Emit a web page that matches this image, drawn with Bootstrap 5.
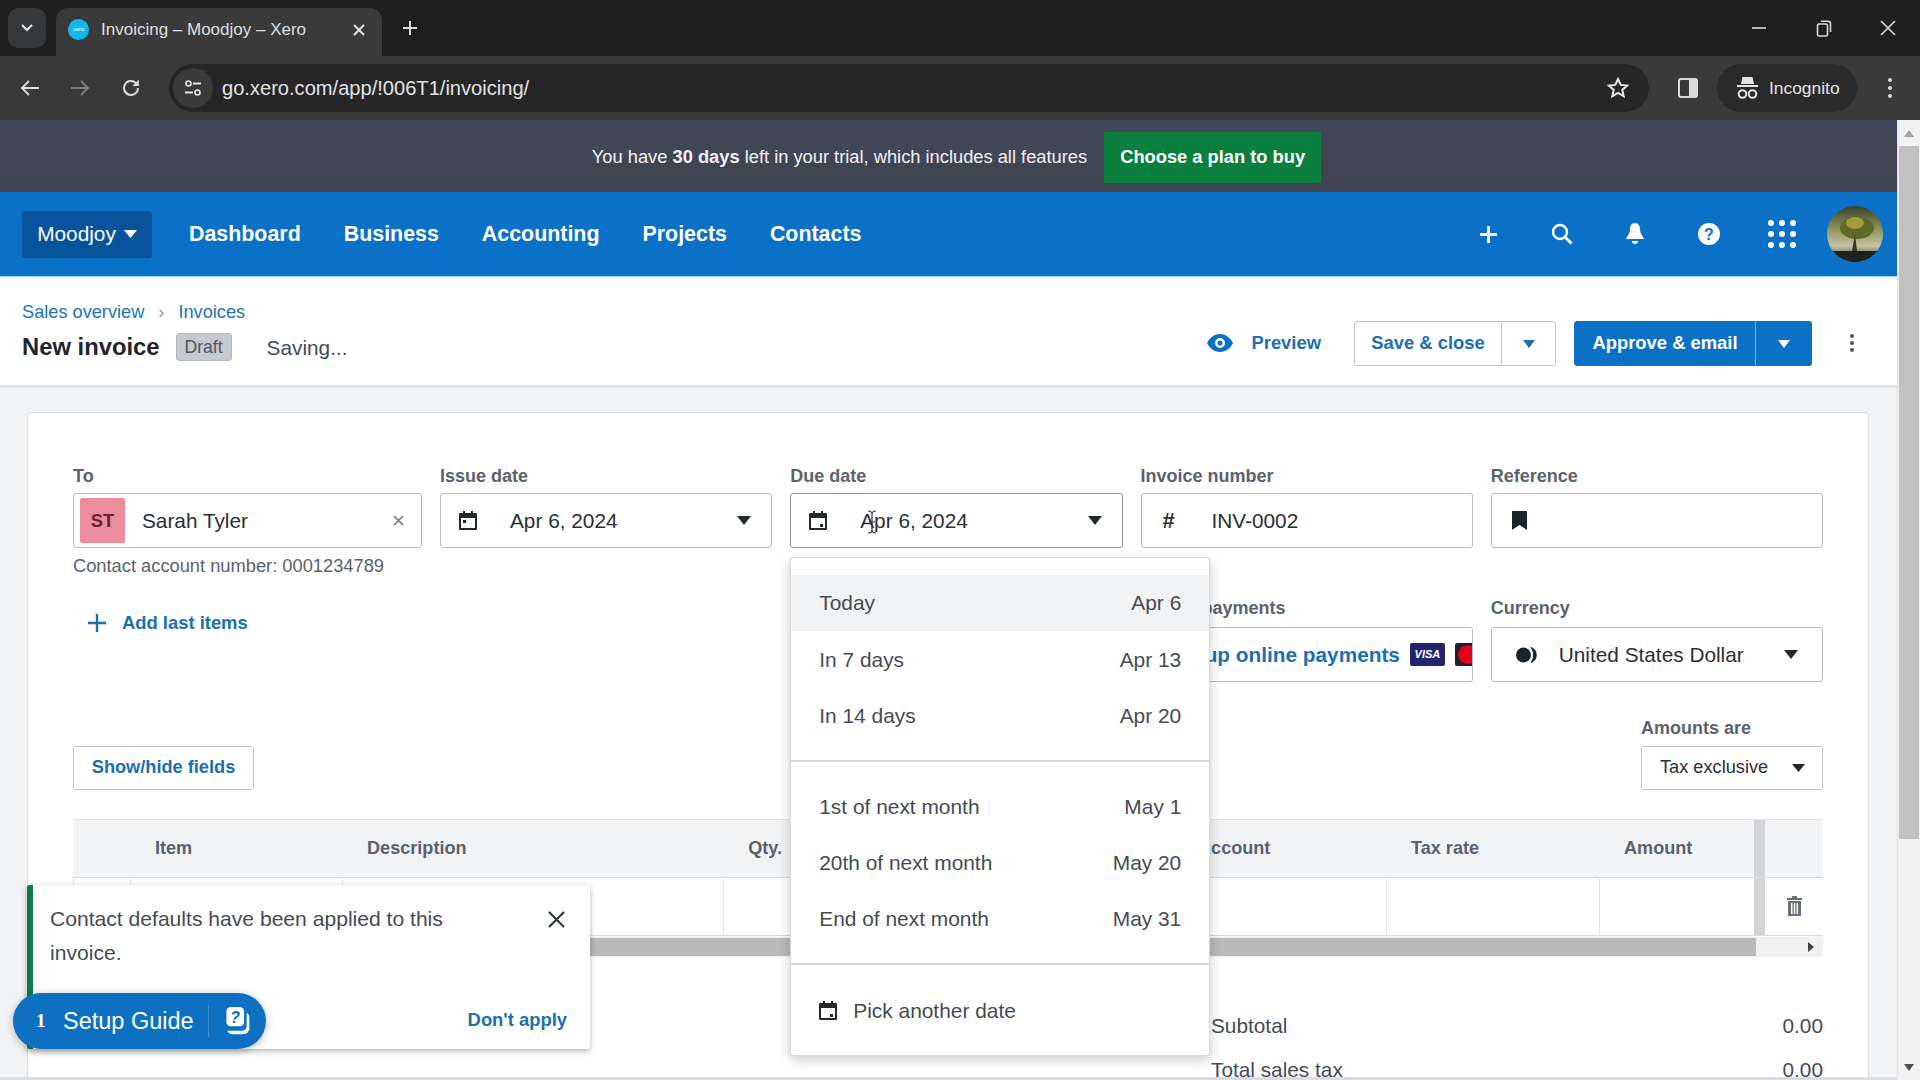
<!DOCTYPE html>
<html lang="en">
<head>
<meta charset="utf-8">
<title>Invoicing – Moodjoy – Xero</title>
<link href="https://cdn.jsdelivr.net/npm/bootstrap@5.3.0/dist/css/bootstrap.min.css" rel="stylesheet">
<style>
html,body{margin:0;height:100%;overflow:hidden}
body{font-family:"Liberation Sans",Arial,sans-serif;font-size:20.8px;color:#2a2f35;background:#fff}
.shell{width:1920px;height:1080px;position:relative;overflow:hidden;display:flex;flex-direction:column}
/* browser chrome */
.tabstrip{height:56px;background:#1f1f20;display:flex;align-items:flex-end;color:#e4e4e4;flex:none}
.tabsearch{width:38px;height:40px;margin:0 10px 8px 8px;background:#37383a;border-radius:10px;display:flex;align-items:center;justify-content:center}
.tabitem{width:326px;height:48px;background:#3a3a3b;border-radius:12px 12px 0 0;display:flex;align-items:center;padding:0 16px 5px 12px;font-size:17px;color:#dfdfdf}
.favi{width:21px;height:21px;border-radius:50%;background:#13b5ea;color:#fff;font-size:6px;line-height:21px;text-align:center;margin-right:12px;flex:none}
.winctl{margin-left:auto;display:flex;align-items:center;height:56px;padding-right:24px;gap:48.500px}
.toolbar{height:64px;background:#3a3a3b;display:flex;align-items:center;flex:none;color:#e4e4e4;padding-left:20px}
.tbicon{flex:none;display:block}
.omni{width:1480px;height:48px;margin-left:28px;background:#262627;border-radius:24px;display:flex;align-items:center;font-size:20.100px;color:#e2e2e2;padding-right:20px}
.siteic{width:40px;height:40px;margin:0 9px 0 4px;background:#3a3a3b;border-radius:50%;display:flex;align-items:center;justify-content:center;flex:none}
.incog{width:140px;height:48px;background:#2a2a2b;border-radius:24px;display:flex;align-items:center;gap:11px;padding-left:20px;font-size:17.400px;margin-left:19px}
.below{flex:1;display:flex;min-height:0}
.pagecol{flex:1;min-width:0;display:flex;flex-direction:column;background:#f2f3f5}
/* banner + nav */
.trial{height:72px;background:linear-gradient(#42475a,#40444f);color:#f1f2f4;display:flex;align-items:center;justify-content:center;font-size:18.300px;flex:none;padding:2px 0 0 16px}
.trial b{font-weight:700}
.buyplan{background:#0b7f3e;color:#fff;border:0;border-radius:2px;font-weight:700;font-size:18.300px;height:51px;width:217px;margin-left:17px;padding:0}
.buyplan:hover{background:#0b7f3e;color:#fff}
.topnav{height:85px;background:#0b71c6;padding:0 5px 0 22px!important;flex:none;border-bottom:1px solid #8bd3ee;flex-wrap:nowrap}
.orgbtn{background:#07549c;color:#fff;border:0;border-radius:3px;height:47px;width:130px;font-size:20.8px;padding:0;margin-right:37px}
.orgbtn:hover{background:#07549c;color:#fff}
.topnav .navbar-nav{gap:43px}
.topnav .navbar-nav .nav-link{color:#fff;font-weight:700;font-size:21.400px;padding:1px 0 0!important}
.topicons{display:flex;align-items:center;margin-left:auto}
.topicons>span{width:73.4px;display:flex;justify-content:center;align-items:center}
/* page header */
.pagehead{height:111px;background:#fff;border-bottom:3px solid #e2e3e5;display:flex;align-items:center;padding:0 0 0 22px;flex:none}
.crumbs{margin:0 0 5px;font-size:18.200px;--bs-breadcrumb-divider:'›';--bs-breadcrumb-item-padding-x:14px}
.crumbs a{color:#1d75b3;text-decoration:none}
.crumbs .breadcrumb-item+.breadcrumb-item::before{color:#8f98a3}
.invtitle{font-weight:700;font-size:23.800px;color:#1f252b;margin:0;line-height:1.2}
.draftpill{background:#c6cacf;color:#4d5560;font-size:17.6px;height:28px;width:56px;border-radius:3px;display:flex;align-items:center;justify-content:center;margin-left:16px;border:1px solid #b4b9bf}
.savingtxt{margin-left:35px;font-size:20.800px;color:#444b54}
.headacts{margin-left:auto;display:flex;align-items:center;padding:24px 85px 0 0}
.prevlink{color:#1a70b0;font-weight:700;font-size:18.4px;display:flex;align-items:center;gap:18px;margin-right:33px}
.outbtn{background:#fff;border:1px solid #c2c6cb;color:#1a70b0;font-weight:700;font-size:18.4px;height:45px;padding:0;border-radius:3px}
.outbtn:hover{background:#fff;color:#1a70b0;border-color:#c2c6cb}
.solbtn{background:#0b71c6;border:1px solid #0b71c6;color:#fff;font-weight:700;font-size:18.4px;height:45px;padding:0;border-radius:3px}
.solbtn:hover{background:#0b71c6;color:#fff;border-color:#0b71c6}
.solsplit{border-left-color:#7fb5e0}
.solsplit:hover{border-left-color:#7fb5e0}
.kebabwrap{position:absolute;left:1849px}
/* card */
.mainarea{flex:1;min-height:0;padding:24px 28px 0 27px;overflow:hidden}
.sheet{background:#fff;border:1px solid #dcdee1;border-radius:4px 4px 0 0;height:700px;padding:51px 45px 0;overflow:hidden;border-bottom:0}
.fieldgrid{display:grid;grid-template-columns:349px repeat(4,minmax(0,1fr));column-gap:18px}
.fldlabel{font-weight:700;font-size:18px;color:#5a626d;line-height:24px;margin:0 0 5px;display:block;white-space:nowrap}
.fldlabel.lowerlabel{margin:48px 0 7px}
.fldbox{height:55px;border:1px solid #b8bcc2;border-radius:3px;display:flex;align-items:center;background:#fff;color:#2a2f35;padding:0;overflow:hidden}
.fldbox.openbox{border-color:#8f959d}
.fldtxt{font-size:20.8px;white-space:nowrap}
.initials{width:45px;height:45px;background:#ec8c9c;color:#6b2530;font-weight:700;font-size:18.4px;border-radius:2px;display:flex;align-items:center;justify-content:center;margin:0 17px 0 6px;flex:none}
.acctno{font-size:18.300px;color:#5b626c;margin-top:6px;line-height:24px}
.addlast{color:#1a70b0;font-weight:700;font-size:18.4px;display:flex;align-items:center;margin:33px 0 0 15px;gap:16px;line-height:24px}
.payrow{padding-left:25px;color:#1a70b0;font-weight:700;font-size:20.8px;white-space:nowrap}
.visab{width:35px;height:23px;background:#23266e;color:#fff;font-size:11px;font-weight:700;font-style:italic;display:inline-flex;align-items:center;justify-content:center;border-radius:2px;flex:none;margin-left:10px}
.mcard{width:35px;height:23px;background:#20202c;border-radius:2px;flex:none;margin-left:10px;display:flex;align-items:center;padding-left:3px}
.mcard i{display:block;width:19px;height:19px;border-radius:50%;background:#e2001a}
.optsrow{display:flex;justify-content:space-between;align-items:flex-end;margin-top:34px}
.fieldsbtn{background:#fff;border:1px solid #bfc3c8;color:#1a70b0;font-weight:700;font-size:18.2px;height:44px;width:181px;border-radius:3px;padding:0}
.fieldsbtn:hover{background:#fff;color:#1a70b0;border-color:#bfc3c8}
.taxsel{width:182px;height:44px;border:1px solid #bfc3c8;border-radius:3px;display:flex;align-items:center;justify-content:space-between;padding:0 17px 0 18px;font-size:18.2px}
.amtlabel{margin-bottom:6px}
/* table */
.linetable{table-layout:fixed;width:1750px;margin:29px 0 0;border-collapse:separate;border-spacing:0;--bs-table-bg:transparent}
.linetable>thead>tr>th{background:#f2f3f5;height:59px;font-weight:700;font-size:18.1px;color:#5a626d;border-top:1px solid #e0e2e5;border-bottom:1px solid #d9dbde;padding:0;vertical-align:middle;box-shadow:none}
.linetable>tbody>tr>td{height:58px;border-right:1px solid #e3e5e8;border-bottom:1px solid #d9dbde;padding:0;vertical-align:middle;box-shadow:none}
.linetable .c-first{border-left:1px solid #e3e5e8}
.linetable .c-noborder{border-right:0}
.linetable>tbody>tr>td.trashcell{padding-bottom:4px}
.linetable .stickgap{background:#d2d4d7!important;border-right:0!important;border-left:0}
.linetable>thead>tr>th.acct-head{padding-left:13px}
.linetable>thead>tr>th.qty-head{padding-right:18px;text-align:right}
.hscroll{width:1750px;height:20px;margin-top:1px;background:#f1f1f1;display:flex;align-items:center}
.hthumb{width:1683px;height:18px;background:#b9b9b9}
.totrow{display:flex;justify-content:space-between;margin:0 0 0 1138px;width:612px;font-size:20.8px;color:#444b54;line-height:24px}
.totsub{margin-top:57px}
.tottax{margin-top:20px}
/* overlay dropdown */
.duemenu{top:64px;left:0;width:420px;height:499px;padding:17px 0 0;border:1px solid #d8dadd;border-radius:3px;box-shadow:0 4px 12px rgba(0,0,0,.2);margin:0;z-index:20}
.duemenu .dropdown-item{height:56.2px;display:flex;justify-content:space-between;align-items:center;padding:0 28px;color:#444b54;font-size:20.900px}
.duemenu .dropdown-item.hotrow{background:#f2f3f5}
.duemenu .dropdown-divider{margin:16px 0 17px;border-color:#d5d7da;border-top-width:2px;opacity:1}
.duemenu .pickrow{justify-content:flex-start;gap:16px}
/* toast */
.notice{position:absolute;left:27px;top:885px;width:563px;height:164px;background:#fff;border:0;border-left:6px solid #0c7d46;border-radius:3px;box-shadow:0 2px 6px rgba(0,0,0,.3);z-index:25;--bs-toast-zindex:25;padding:0;font-size:21.100px;color:#444b54;max-width:none}
.noticetxt{position:absolute;left:17px;top:17px;width:440px;line-height:34px}
.noticex{position:absolute;right:25px;top:26px;line-height:0}
.noticelink{position:absolute;right:23px;top:123px;color:#1a70b0;font-weight:700;font-size:18.4px;line-height:24px}
.guidepill{position:absolute;left:13px;top:993px;width:253px;height:56px;border-radius:28px;background:#0d70c0;color:#fff;display:flex;align-items:center;z-index:30;box-shadow:0 2px 8px rgba(0,0,0,.25);font-size:23.500px;padding-left:23px}
.guidenum{font-weight:700;font-size:19px;width:27px;font-family:"Liberation Serif",serif}
.guidelabel{padding-top:2px}
.guidesep{width:1px;height:32px;background:#3f8fd0;margin:0 13px 0 14px}
/* scrollbar */
.pagescroll{width:23px;background:#f1f1f1;flex:none;border-left:1px solid #e2e2e2;display:flex;flex-direction:column;align-items:center}
.sarrow{height:26px;display:flex;align-items:center;justify-content:center;flex:none}
.sthumb{width:20px;height:693px;background:#c1c1c1}
.sspace{flex:1}
.ibeam{position:absolute;left:866px;top:510px;z-index:40;line-height:0}
.bottomedge{position:absolute;left:0;bottom:0;width:1897px;height:3px;background:#dcdde0;z-index:10}
</style>
</head>
<body>
<div class="shell">

  <div class="tabstrip">
    <div class="tabsearch"><svg width="14" height="10" viewBox="0 0 14 10"><path d="M2 2l5 5 5-5" fill="none" stroke="#e4e4e4" stroke-width="2.2"/></svg></div>
    <div class="tabitem">
      <span class="favi">xero</span><span>Invoicing – Moodjoy – Xero</span>
      <svg class="ms-auto" width="14" height="14" viewBox="0 0 14 14"><path d="M2 2l10 10M12 2L2 12" stroke="#e4e4e4" stroke-width="2"/></svg>
    </div>
    <svg style="margin:0 0 20px 20px" width="16" height="16" viewBox="0 0 16 16"><path d="M8 1v14M1 8h14" stroke="#dcdcdc" stroke-width="2"/></svg>
    <div class="winctl">
      <svg width="16" height="16" viewBox="0 0 16 16"><path d="M1 8h14" stroke="#d8d8d8" stroke-width="1.6"/></svg>
      <svg width="16" height="18" viewBox="0 0 16 18"><rect x="1.5" y="5" width="10" height="12" rx="1.5" fill="none" stroke="#d8d8d8" stroke-width="1.6"/><path d="M5 2.2h7a2.5 2.5 0 0 1 2.5 2.5V13" fill="none" stroke="#d8d8d8" stroke-width="1.6"/></svg>
      <svg width="16" height="16" viewBox="0 0 16 16"><path d="M1 1l14 14M15 1L1 15" stroke="#d8d8d8" stroke-width="1.6"/></svg>
    </div>
  </div>

  <div class="toolbar">
    <svg class="tbicon" width="20" height="18" viewBox="0 0 20 18"><path d="M19 9H3M9 2L2 9l7 7" fill="none" stroke="#dcdcdc" stroke-width="2"/></svg>
    <svg class="tbicon" style="margin-left:30px" width="20" height="18" viewBox="0 0 20 18"><path d="M1 9h16M11 2l7 7-7 7" fill="none" stroke="#7d7d7d" stroke-width="2"/></svg>
    <svg class="tbicon" style="margin-left:31px" width="20" height="20" viewBox="0 0 20 20"><path d="M17 10a7 7 0 1 1-2.2-5.1L17 7" fill="none" stroke="#dcdcdc" stroke-width="2"/><path d="M17.8 1.5V8h-6.500z" fill="#dcdcdc"/></svg>
    <div class="omni">
      <span class="siteic"><svg width="18" height="18" viewBox="0 0 18 18"><circle cx="4.500" cy="4.500" r="2.500" fill="none" stroke="#e4e4e4" stroke-width="1.600"/><path d="M9 4.500h8M1 13.500h8" stroke="#e4e4e4" stroke-width="1.800"/><circle cx="13.500" cy="13.500" r="2.500" fill="none" stroke="#e4e4e4" stroke-width="1.600"/></svg></span>
      <span>go.xero.com/app/!006T1/invoicing/</span>
      <svg class="ms-auto" width="22" height="22" viewBox="0 0 22 22"><path d="M11 2l2.700 5.900 6.400.7-4.800 4.300 1.400 6.300L11 16l-5.700 3.200 1.400-6.300L1.900 8.600l6.400-.7z" fill="none" stroke="#e4e4e4" stroke-width="2"/></svg>
    </div>
    <svg class="tbicon" style="margin-left:29px" width="20" height="20" viewBox="0 0 20 20"><rect x="1" y="1" width="18" height="18" rx="2" fill="none" stroke="#dcdcdc" stroke-width="2"/><rect x="11" y="1" width="8" height="18" fill="#dcdcdc"/></svg>
    <div class="incog">
      <svg width="21" height="24" viewBox="0 0 21 24"><path d="M5.500 1h10l1.500 7H4z" fill="#e4e4e4"/><path d="M0 10h21" stroke="#e4e4e4" stroke-width="2"/><circle cx="5.500" cy="18" r="3.800" fill="none" stroke="#e4e4e4" stroke-width="2"/><circle cx="15.500" cy="18" r="3.800" fill="none" stroke="#e4e4e4" stroke-width="2"/></svg>
      <span>Incognito</span>
    </div>
    <svg class="tbicon" style="margin-left:30px" width="6" height="22" viewBox="0 0 6 22"><circle cx="3" cy="3" r="2" fill="#dcdcdc"/><circle cx="3" cy="11" r="2" fill="#dcdcdc"/><circle cx="3" cy="19" r="2" fill="#dcdcdc"/></svg>
  </div>

  <div class="below">
    <div class="pagecol">
      <div class="trial">
        <span>You have <b>30 days</b> left in your trial, which includes all features</span>
        <button type="button" class="btn buyplan">Choose a plan to buy</button>
      </div>

      <nav class="navbar navbar-expand topnav">
        <button type="button" class="btn orgbtn d-flex align-items-center justify-content-center gap-2">Moodjoy
          <svg width="13" height="8" viewBox="0 0 13 8"><path d="M0 0h13L6.500 8z" fill="#fff"/></svg></button>
        <ul class="navbar-nav">
          <li class="nav-item"><a class="nav-link" href="#">Dashboard</a></li>
          <li class="nav-item"><a class="nav-link" href="#">Business</a></li>
          <li class="nav-item"><a class="nav-link" href="#">Accounting</a></li>
          <li class="nav-item"><a class="nav-link" href="#">Projects</a></li>
          <li class="nav-item"><a class="nav-link" href="#">Contacts</a></li>
        </ul>
        <div class="topicons">
          <span><svg width="19" height="19" viewBox="0 0 19 19"><path d="M9.500 1v17M1 9.500h17" stroke="#fff" stroke-width="3"/></svg></span>
          <span><svg width="22" height="22" viewBox="0 0 22 22"><circle cx="9" cy="9" r="7" fill="none" stroke="#fff" stroke-width="2.400"/><path d="M14 14l6.500 6.500" stroke="#fff" stroke-width="3"/></svg></span>
          <span><svg width="20" height="24" viewBox="0 0 20 24"><path d="M10 1c3.500 0 5 3 5 6 0 5 3 7 4 10H1c1-3 4-5 4-10 0-3 1.500-6 5-6zM7 19h6a3 3 0 0 1-6 0z" fill="#fff"/></svg></span>
          <span><svg width="22" height="22" viewBox="0 0 22 22"><circle cx="11" cy="11" r="11" fill="#fff"/><text x="11" y="17" text-anchor="middle" font-family="Liberation Sans" font-weight="700" font-size="16" fill="#0b71c6">?</text></svg></span>
          <span><svg width="30" height="30" viewBox="0 0 30 30" fill="#fff"><circle cx="4" cy="4" r="3"/><circle cx="15" cy="4" r="3"/><circle cx="26" cy="4" r="3"/><circle cx="4" cy="15" r="3"/><circle cx="15" cy="15" r="3"/><circle cx="26" cy="15" r="3"/><circle cx="4" cy="26" r="3"/><circle cx="15" cy="26" r="3"/><circle cx="26" cy="26" r="3"/></svg></span>
          <span><svg width="56" height="56" viewBox="0 0 56 56"><defs><clipPath id="av"><circle cx="28" cy="28" r="28"/></clipPath><linearGradient id="avg" x1="0" y1="0" x2="0" y2="1"><stop offset="0" stop-color="#33402c"/><stop offset=".4" stop-color="#8f9058"/><stop offset=".72" stop-color="#c4c2a4"/><stop offset="1" stop-color="#23261f"/></linearGradient></defs><g clip-path="url(#av)"><rect width="56" height="56" fill="url(#avg)"/><ellipse cx="30" cy="22" rx="17" ry="11" fill="#5f6a27"/><ellipse cx="28" cy="17" rx="9" ry="6" fill="#a59a3c"/><path d="M28 28l2 17h-5z" fill="#3a3524"/><rect y="45" width="56" height="11" fill="#1f2219"/></g></svg></span>
        </div>
      </nav>

      <header class="pagehead">
        <div>
          <ol class="breadcrumb crumbs">
            <li class="breadcrumb-item"><a href="#">Sales overview</a></li>
            <li class="breadcrumb-item"><a href="#">Invoices</a></li>
          </ol>
          <div class="d-flex align-items-center">
            <h1 class="invtitle">New invoice</h1>
            <span class="draftpill">Draft</span>
            <span class="savingtxt">Saving...</span>
          </div>
        </div>
        <div class="headacts">
          <span class="prevlink"><svg width="26" height="18" viewBox="0 0 26 18"><path fill-rule="evenodd" d="M13 0c6 0 10.500 4 13 9-2.500 5-7 9-13 9S2.500 14 0 9c2.500-5 7-9 13-9zm0 4a5 5 0 1 0 0 10 5 5 0 0 0 0-10z" fill="#0b71c6"/><circle cx="13" cy="9" r="2.500" fill="#0b71c6"/></svg>Preview</span>
          <div class="btn-group me-0" role="group">
            <button type="button" class="btn outbtn" style="width:148px">Save &amp; close</button>
            <button type="button" class="btn outbtn" style="width:55px"><svg width="12" height="8" viewBox="0 0 12 8"><path d="M0 0h12L6 8z" fill="#1a70b0"/></svg></button>
          </div>
          <div class="btn-group" role="group" style="margin-left:18px">
            <button type="button" class="btn solbtn" style="width:182px">Approve &amp; email</button>
            <button type="button" class="btn solbtn solsplit" style="width:57px"><svg width="12" height="8" viewBox="0 0 12 8"><path d="M0 0h12L6 8z" fill="#fff"/></svg></button>
          </div>
          <span class="kebabwrap"><svg width="6" height="20" viewBox="0 0 6 20" class="d-block"><circle cx="3" cy="3" r="2" fill="#4d5560"/><circle cx="3" cy="10" r="2" fill="#4d5560"/><circle cx="3" cy="17" r="2" fill="#4d5560"/></svg></span>
        </div>
      </header>

      <main class="mainarea">
        <section class="sheet">
          <div class="fieldgrid">
            <div>
              <label class="fldlabel">To</label>
              <div class="fldbox">
                <span class="initials">ST</span><span class="fldtxt">Sarah Tyler</span>
                <svg class="ms-auto" style="margin-right:17px" width="11" height="11" viewBox="0 0 11 11"><path d="M1 1l9 9M10 1l-9 9" stroke="#6a717b" stroke-width="1.500"/></svg>
              </div>
              <div class="acctno">Contact account number: 0001234789</div>
              <div class="addlast"><svg width="18" height="18" viewBox="0 0 18 18"><path d="M9 0v18M0 9h18" stroke="#1a70b0" stroke-width="2.400"/></svg>Add last items</div>
            </div>
            <div>
              <label class="fldlabel">Issue date</label>
              <div class="fldbox">
                <svg style="margin:0 0 0 18px" width="18" height="19" viewBox="0 0 18 19"><path fill-rule="evenodd" d="M1 2h3V0h2v2h6V0h2v2h3a1 1 0 0 1 1 1v15a1 1 0 0 1-1 1H1a1 1 0 0 1-1-1V3a1 1 0 0 1 1-1zm1 5v10h14V7z" fill="#23282d"/><rect x="4" y="9" width="3" height="3" fill="#23282d"/></svg>
                <span class="fldtxt" style="margin-left:33px">Apr 6, 2024</span>
                <svg class="ms-auto" style="margin-right:20px" width="14" height="9" viewBox="0 0 14 9"><path d="M0 0h14L7 9z" fill="#23282d"/></svg>
              </div>
            </div>
            <div>
              <label class="fldlabel">Due date</label>
              <div class="position-relative">
                <div class="fldbox openbox">
                  <svg style="margin:0 0 0 18px" width="18" height="19" viewBox="0 0 18 19"><path fill-rule="evenodd" d="M1 2h3V0h2v2h6V0h2v2h3a1 1 0 0 1 1 1v15a1 1 0 0 1-1 1H1a1 1 0 0 1-1-1V3a1 1 0 0 1 1-1zm1 5v10h14V7z" fill="#23282d"/><rect x="11" y="13" width="3" height="3" fill="#23282d"/></svg>
                  <span class="fldtxt" style="margin-left:33px">Apr 6, 2024</span>
                  <svg class="ms-auto" style="margin-right:20px" width="14" height="9" viewBox="0 0 14 9"><path d="M0 0h14L7 9z" fill="#23282d"/></svg>
                </div>
                <div class="dropdown-menu show duemenu">
                  <a class="dropdown-item hotrow" href="#"><span>Today</span><span>Apr 6</span></a>
                  <a class="dropdown-item" href="#"><span>In 7 days</span><span>Apr 13</span></a>
                  <a class="dropdown-item" href="#"><span>In 14 days</span><span>Apr 20</span></a>
                  <hr class="dropdown-divider">
                  <a class="dropdown-item" href="#"><span>1st of next month</span><span>May 1</span></a>
                  <a class="dropdown-item" href="#"><span>20th of next month</span><span>May 20</span></a>
                  <a class="dropdown-item" href="#"><span>End of next month</span><span>May 31</span></a>
                  <hr class="dropdown-divider">
                  <a class="dropdown-item pickrow" href="#"><svg width="18" height="19" viewBox="0 0 18 19"><path fill-rule="evenodd" d="M1 2h3V0h2v2h6V0h2v2h3a1 1 0 0 1 1 1v15a1 1 0 0 1-1 1H1a1 1 0 0 1-1-1V3a1 1 0 0 1 1-1zm1 5v10h14V7z" fill="#23282d"/><rect x="11" y="13" width="3" height="3" fill="#23282d"/></svg><span>Pick another date</span></a>
                </div>
              </div>
            </div>
            <div>
              <label class="fldlabel">Invoice number</label>
              <div class="fldbox">
                <span style="margin-left:21px;font-weight:700;font-size:22px;width:50px;flex:none">#</span>
                <span class="fldtxt" style="margin-left:-1px">INV-0002</span>
              </div>
              <label class="fldlabel lowerlabel">Online payments</label>
              <div class="fldbox">
                <span class="payrow">Set up online payments</span><span class="visab">VISA</span><span class="mcard"><i></i></span>
              </div>
            </div>
            <div>
              <label class="fldlabel">Reference</label>
              <div class="fldbox">
                <svg style="margin-left:20px" width="15" height="19" viewBox="0 0 15 19"><path d="M0 0h15v19l-7.500-5L0 19z" fill="#1e2328"/></svg>
              </div>
              <label class="fldlabel lowerlabel">Currency</label>
              <div class="fldbox">
                <svg style="margin-left:24px" width="22" height="16" viewBox="0 0 22 16"><circle cx="7.500" cy="8" r="7.500" fill="#1e2328"/><path d="M15 .5a8 8 0 0 1 0 15c2-2.500 2.500-4.500 2.500-7.500S17 3 15 .5z" fill="#1e2328" stroke="#1e2328" stroke-width="1"/></svg>
                <span class="fldtxt" style="margin-left:21px">United States Dollar</span>
                <svg class="ms-auto" style="margin-right:24px" width="14" height="9" viewBox="0 0 14 9"><path d="M0 0h14L7 9z" fill="#23282d"/></svg>
              </div>
            </div>
          </div>

          <div class="optsrow">
            <button type="button" class="btn fieldsbtn">Show/hide fields</button>
            <div>
              <label class="fldlabel amtlabel">Amounts are</label>
              <div class="taxsel"><span>Tax exclusive</span><svg width="13" height="8" viewBox="0 0 13 8"><path d="M0 0h13L6.500 8z" fill="#23282d"/></svg></div>
            </div>
          </div>

          <table class="table linetable">
            <colgroup><col style="width:58px"><col style="width:212px"><col style="width:381px"><col style="width:76px"><col style="width:200px"><col style="width:185px"><col style="width:202px"><col style="width:213px"><col style="width:154px"><col style="width:11px"><col style="width:58px"></colgroup>
            <thead><tr>
              <th></th><th class="ps-4">Item</th><th class="ps-4">Description</th><th class="qty-head">Qty.</th><th></th><th></th><th class="acct-head">Account</th><th class="ps-4">Tax rate</th><th class="ps-4">Amount</th><th class="stickgap"></th><th></th>
            </tr></thead>
            <tbody><tr>
              <td class="c-first"></td><td></td><td></td><td></td><td></td><td></td><td></td><td></td><td class="c-noborder"></td><td class="stickgap"></td>
              <td class="c-noborder text-center trashcell"><svg width="15" height="20" viewBox="0 0 15 20"><path d="M5 0h5v2h5v2H0V2h5zM1 5h13v15H1zM4 7v11h1.500V7zm2.800 0v11h1.400V7zm2.700 0v11H11V7z" fill="#6a717b" fill-rule="evenodd"/></svg></td>
            </tr></tbody>
          </table>
          <div class="hscroll"><div class="hthumb"></div><svg style="margin-left:52px" width="6" height="10" viewBox="0 0 6 10"><path d="M0 0l6 5-6 5z" fill="#444"/></svg></div>

          <div class="totrow totsub"><span>Subtotal</span><span>0.00</span></div>
          <div class="totrow tottax"><span>Total sales tax</span><span>0.00</span></div>
        </section>
      </main>
    </div>
    <aside class="pagescroll">
      <div class="sarrow"><svg width="10" height="7" viewBox="0 0 10 7"><path d="M5 0l5 7H0z" fill="#a3a3a3"/></svg></div>
      <div class="sthumb"></div>
      <div class="sspace"></div>
      <div class="sarrow"><svg width="10" height="7" viewBox="0 0 10 7"><path d="M0 0h10L5 7z" fill="#505050"/></svg></div>
    </aside>
  </div>

  <div class="toast show notice" role="status">
    <div class="noticetxt">Contact defaults have been applied to this invoice.</div>
    <span class="noticex"><svg width="17" height="17" viewBox="0 0 17 17"><path d="M1 1l15 15M16 1L1 16" stroke="#30363c" stroke-width="2.200"/></svg></span>
    <span class="noticelink">Don't apply</span>
  </div>

  <div class="guidepill">
    <span class="guidenum">1</span><span class="guidelabel">Setup Guide</span><span class="guidesep"></span>
    <svg width="30" height="30" viewBox="0 0 30 34"><rect x="3" y="1" width="20" height="22" rx="5" fill="#fff"/><text x="13" y="19" text-anchor="middle" font-family="Liberation Sans" font-weight="700" font-style="italic" font-size="18" fill="#0d70c0">?</text><path d="M26 8c2 1 3 3 3 5v12c0 4-3 7-7 7H10c-3 0-5-2-6-4h17c3 0 5-2 5-5z" fill="#fff"/></svg>
  </div>

  <span class="ibeam"><svg width="12" height="24" viewBox="0 0 12 24"><path d="M2 1c2 0 4 .5 4 3v16c0 2.500-2 3-4 3M10 1C8 1 6 1.500 6 4M6 20c0 2.500 2 3 4 3M3 12h6" fill="none" stroke="#33393f" stroke-width="1.200"/></svg></span>
  <div class="bottomedge"></div>
</div>
<script src="https://cdn.jsdelivr.net/npm/bootstrap@5.3.0/dist/js/bootstrap.bundle.min.js"></script>
</body>
</html>
